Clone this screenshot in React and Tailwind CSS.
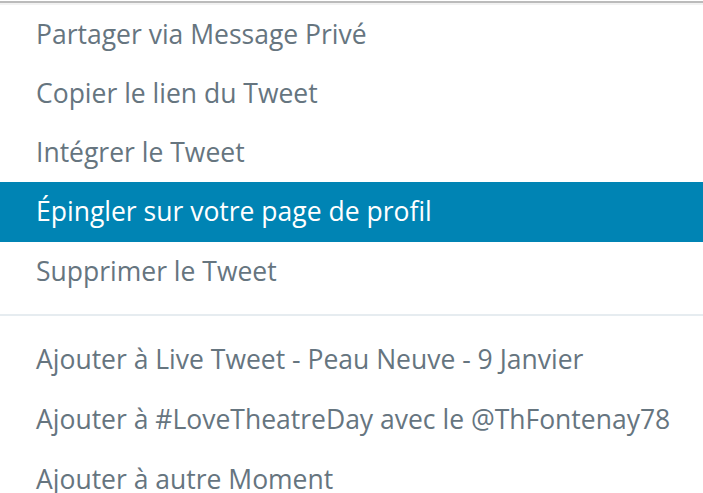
const topItems = [
  'Partager via Message Privé',
  'Copier le lien du Tweet',
  'Intégrer le Tweet',
  'Épingler sur votre page de profil',
  'Supprimer le Tweet',
];

const momentItems = [
  'Ajouter à Live Tweet - Peau Neuve - 9 Janvier',
  'Ajouter à #LoveTheatreDay avec le @ThFontenay78',
  'Ajouter à autre Moment',
];

export default function App() {
  return (
    <div className="w-[703px] h-[493px] overflow-hidden bg-white font-['Segoe_UI','Open_Sans',sans-serif]">
      <div className="mt-px border-t-2 border-[#bbbbbb]" />
      <div className="h-[2px] bg-[#f2f2f2]" />
      <ul>
        {topItems.map((label, i) => (
          <li
            key={label}
            className={
              i === 3
                ? 'h-[60px] flex items-center pl-[36px] text-[26.5px] bg-[#0084b4] text-white'
                : 'h-[59px] flex items-center pl-[36px] text-[26.5px] text-[#66757f]'
            }
          >
            {label}
          </li>
        ))}
      </ul>
      <div className="mt-[13px] mb-[14px] h-[2px] bg-[#e6ecf0]" />
      <ul>
        {momentItems.map((label) => (
          <li key={label} className="h-[60px] flex items-center pl-[36px] text-[26.5px] text-[#66757f]">
            {label}
          </li>
        ))}
      </ul>
    </div>
  );
}
